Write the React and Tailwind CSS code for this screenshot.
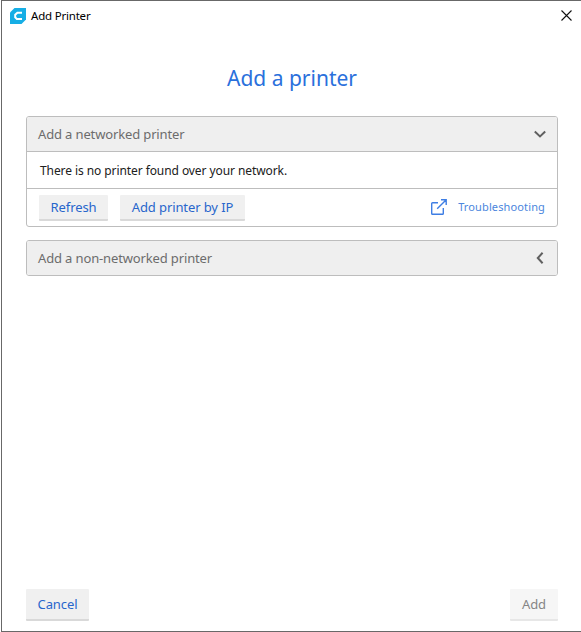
import React from "react";

function Chevron({ left = false }) {
  return (
    <svg width="14" height="14" viewBox="0 0 14 14" fill="none" stroke="#606060" strokeWidth="2">
      {left ? <path d="M9.6 1.8 4.8 7l4.8 5.2" /> : <path d="M1.8 4.6 7 9.4l5.2-4.8" />}
    </svg>
  );
}

function SectionHeader({ label, left }) {
  return (
    <div className="flex h-[34px] items-center justify-between bg-[#efefef] pr-[10px] pl-[11px] text-[13px] text-[#6c6c6c]">
      <span className="pt-[2px] tracking-[-0.14px]">{label}</span>
      <Chevron left={left} />
    </div>
  );
}

function Button({ children, className }) {
  return (
    <button className={`flex items-center justify-center rounded-[1px] border-b-2 text-[13px] tracking-[-0.1px] whitespace-nowrap ${className}`}>
      <span className="pt-[2px]">{children}</span>
    </button>
  );
}

export default function App() {
  return (
    <div className="h-[632px] w-[581px] bg-white pl-px font-['Noto_Sans',sans-serif]">
      <div className="flex h-full flex-col border-t border-b border-l border-[#686868]">
        <header className="flex h-[30px] shrink-0 items-center pr-[8px] pl-[8px]">
          <svg className="-mt-px" width="16" height="16" viewBox="0 0 16 16">
            <path d="M4.5 0H16v11.5L11.5 16H0V4.5z" fill="#16aee5" />
            <path d="M12 4.8H7.4L5.2 6.8v2.5l1.7 1.8H12" fill="none" stroke="white" strokeWidth="2" />
          </svg>
          <span className="ml-[5px] text-[11.5px] leading-4 tracking-[-0.2px] text-black">Add Printer</span>
          <svg className="-mt-[2px] ml-auto mr-px" width="11" height="11" viewBox="0 0 11 11" stroke="#111" strokeWidth="1.1">
            <path d="M.5.5l10 10M10.5.5l-10 10" />
          </svg>
        </header>

        <main className="flex flex-1 flex-col pr-[23px] pb-[10px] pl-[24px]">
          <h1 className="mt-[31px] h-[32px] text-center text-[21px] leading-[32px] text-[#2a70dc]">Add a printer</h1>

          <section className="mt-[22px] h-[111px] overflow-hidden rounded-[3px] border border-[#bdbdbd]">
            <SectionHeader label="Add a networked printer" />
            <p className="flex h-[38px] items-center border-t border-b border-[#bdbdbd] pt-[2px] pl-[13px] text-[12px] tracking-[-0.08px] text-[#202020]">
              There is no printer found over your network.
            </p>
            <div className="flex h-[37px] items-center pr-[12px] pl-[12px]">
              <Button className="h-[26px] w-[69px] border-[#d9d9d9] bg-[#f0f0f0] text-[#2866cc]">Refresh</Button>
              <Button className="ml-[12px] h-[26px] w-[125px] border-[#d9d9d9] bg-[#f0f0f0] text-[#2866cc]">Add printer by IP</Button>
              <a className="ml-auto flex items-center text-[11px] text-[#4b86dd]">
                <svg className="-mt-[2px] mr-[11px]" width="16" height="16" viewBox="0 0 16 16" fill="none" stroke="#3e7ee4" strokeWidth="1.4">
                  <path d="M7 3.7H1.6q-.9 0-.9.9v9.8q0 .9.9.9h9.8q.9 0 .9-.9V9M10 .8h5.2V6M15 1 6.2 9.8" />
                </svg>
                <span className="tracking-[0.13px]">Troubleshooting</span>
              </a>
            </div>
          </section>

          <section className="mt-[13px] h-[36px] overflow-hidden rounded-[3px] border border-[#bdbdbd]">
            <SectionHeader label="Add a non-networked printer" left />
          </section>

          <footer className="mt-auto flex justify-between">
            <Button className="h-[32px] w-[63px] border-[#d9d9d9] bg-[#f0f0f0] text-[#2866cc]">Cancel</Button>
            <Button className="h-[32px] w-[48px] border-[#e7e7e7] bg-[#f6f6f6] text-[#858585]">Add</Button>
          </footer>
        </main>
      </div>
    </div>
  );
}
